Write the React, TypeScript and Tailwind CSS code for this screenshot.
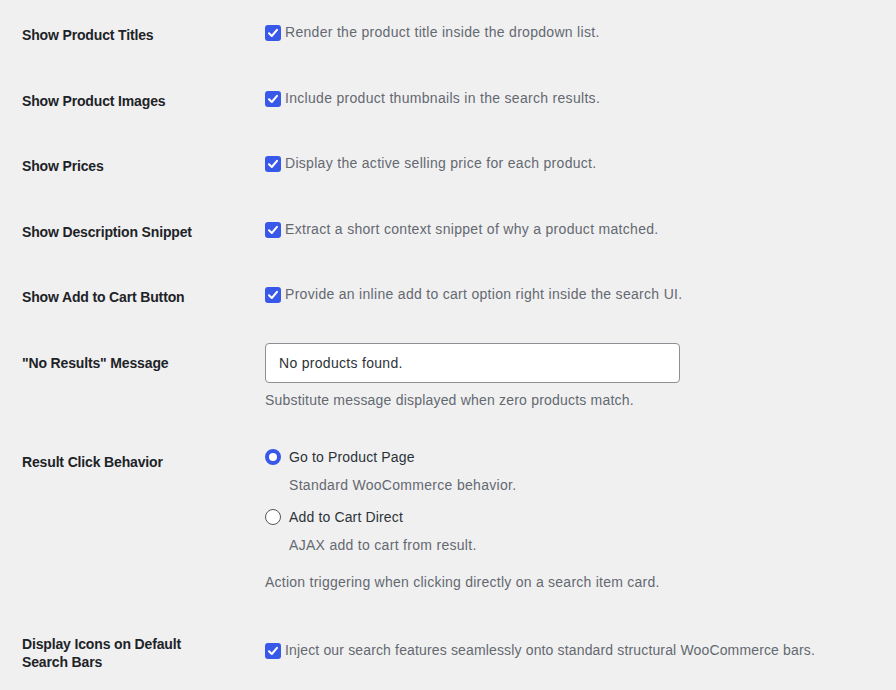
const font = { fontFamily: '"Segoe UI", "Liberation Sans", Arial, sans-serif' };

function Check() {
  return (
    <span className="mt-[3px] flex h-[16px] w-[16px] shrink-0 items-center justify-center rounded-[3px] bg-[#3858e9]">
      <svg width="12" height="12" viewBox="0 0 12 12" fill="none">
        <path d="M2 6.2 L4.8 9 L10 2.8" stroke="white" strokeWidth="2" strokeLinecap="round" strokeLinejoin="round" />
      </svg>
    </span>
  );
}

function Radio({ on }: { on?: boolean }) {
  return on ? (
    <span className="h-[16px] w-[16px] shrink-0 rounded-full border-[4px] border-[#3858e9] bg-white" />
  ) : (
    <span className="h-[16px] w-[16px] shrink-0 rounded-full border-[1.5px] border-[#50575e] bg-white" />
  );
}

const checkRows = [
  { label: "Show Product Titles", desc: "Render the product title inside the dropdown list." },
  { label: "Show Product Images", desc: "Include product thumbnails in the search results." },
  { label: "Show Prices", desc: "Display the active selling price for each product." },
  { label: "Show Description Snippet", desc: "Extract a short context snippet of why a product matched." },
  { label: "Show Add to Cart Button", desc: "Provide an inline add to cart option right inside the search UI." },
];

const th = "w-[243px] shrink-0 pt-[24px] font-semibold leading-[18px] tracking-[-0.15px] text-[#1d2327]";
const desc = "leading-[20px] tracking-[0.3px] text-[#646970]";

export default function App() {
  return (
    <div className="h-[690px] w-[896px] overflow-hidden bg-[#f0f0f1] pl-[22px] pt-[2px] text-[14px]" style={font}>
      {checkRows.map((r) => (
        <div key={r.label} className="flex h-[65.5px]">
          <div className={th}>{r.label}</div>
          <div className="flex items-start gap-[4px] pt-[20px]">
            <Check />
            <span className={desc}>{r.desc}</span>
          </div>
        </div>
      ))}

      <div className="flex h-[99.5px]">
        <div className={th}>"No Results" Message</div>
        <div className="pt-[13.5px]">
          <div className="flex h-[40px] w-[415px] items-center rounded-[4px] border border-[#8c8f94] bg-white px-[13px] tracking-[0.3px] text-[#2c3338]">
            No products found.
          </div>
          <p className="mt-[7px] leading-[20px] tracking-[0.2px] text-[#646970]">Substitute message displayed when zero products match.</p>
        </div>
      </div>

      <div className="flex h-[182px]">
        <div className={th}>Result Click Behavior</div>
        <div className="pt-[18px]">
          <div className="flex items-center gap-[8px] leading-[20px] tracking-[0.15px] text-[#2c3338]">
            <Radio on />
            <span>Go to Product Page</span>
          </div>
          <p className={"mt-[8px] pl-[24px] " + desc}>Standard WooCommerce behavior.</p>
          <div className="mt-[12px] flex items-center gap-[8px] leading-[20px] tracking-[0.15px] text-[#2c3338]">
            <Radio />
            <span>Add to Cart Direct</span>
          </div>
          <p className={"mt-[8px] pl-[24px] " + desc}>AJAX add to cart from result.</p>
          <p className="mt-[17px] leading-[20px] tracking-[0.25px] text-[#646970]">Action triggering when clicking directly on a search item card.</p>
        </div>
      </div>

      <div className="flex">
        <div className={th}>
          Display Icons on Default
          <br />
          Search Bars
        </div>
        <div className="flex items-start gap-[4px] pt-[29px]">
          <Check />
          <span className="leading-[20px] tracking-[0.15px] text-[#646970]">
            Inject our search features seamlessly onto standard structural WooCommerce bars.
          </span>
        </div>
      </div>
    </div>
  );
}
